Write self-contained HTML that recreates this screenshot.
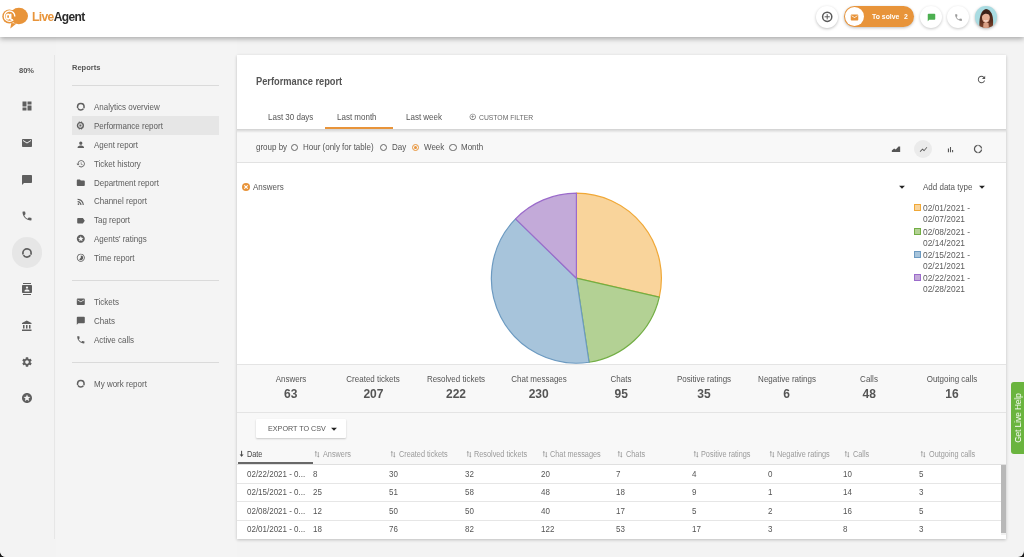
<!DOCTYPE html>
<html><head><meta charset="utf-8">
<style>
*{box-sizing:border-box;margin:0;padding:0}
html,body{width:1024px;height:557px;overflow:hidden;background:#1a1a1a}
body{font-family:"Liberation Sans",sans-serif;color:#5f5f5f;position:relative}
#app{will-change:transform;position:absolute;left:0;top:0;width:1024px;height:557px;background:#f3f3f3;border-radius:0 0 6px 6px;overflow:hidden}
.a{position:absolute;white-space:nowrap}
svg{display:block}
#hdr{position:absolute;left:0;top:0;width:1024px;height:36.5px;background:#fff;box-shadow:0 2px 5px rgba(0,0,0,.3);z-index:5}
#side{position:absolute;left:0;top:37px;width:55px;height:520px;background:#f3f3f3}
#vline{position:absolute;left:54px;top:55px;width:3px;height:484px;border-left:1px solid #e6e6e6;border-right:1px solid #e6e6e6}
#panel{position:absolute;left:56px;top:37px;width:181px;height:520px;background:#f4f4f4}
.mi{position:absolute;left:72px;width:147px;height:19px;font-size:8px;color:#5c5c5c}
.mi svg{position:absolute;left:4px;top:5px;width:9px;height:9px;fill:#616161}
.mi span{position:absolute;left:21px;top:5px}
.hl{position:absolute;left:72px;height:1px;width:147px;background:#dadada}
.sic{position:absolute;left:21px;width:12px;height:12px;fill:#5f5f5f}
#card{position:absolute;left:237px;top:55px;width:769px;height:483.6px;background:#fff;box-shadow:0 1px 3px rgba(0,0,0,.22)}
</style></head><body>
<div id="app">
<div id="hdr">
  <!-- logo -->
  <svg class="a" style="left:0px;top:4px" width="32" height="28" viewBox="0 0 32 28">
    <ellipse cx="18.9" cy="12" rx="9.1" ry="8.2" fill="#e8943a"/>
    <path d="M11.3 19 L10.3 24.6 L16.5 19.5 Z" fill="#e8943a"/>
    <circle cx="9.3" cy="12.5" r="7" fill="#e8943a"/>
    <circle cx="9.6" cy="12.2" r="5.2" fill="none" stroke="#fff" stroke-width="1.4" stroke-dasharray="28.10 4.57" transform="rotate(45 9.6 12.2)"/>
    <ellipse cx="8.1" cy="12.6" rx="1.7" ry="2.3" fill="none" stroke="#fff" stroke-width="1.6"/>
    <path d="M10.7 9.8 V14.4 Q10.9 16.2 12.9 15.8" fill="none" stroke="#fff" stroke-width="1.5"/>
  </svg>
  <div class="a" style="left:32px;top:9.6px;font-size:12px;font-weight:bold;letter-spacing:-0.6px"><span style="color:#e8943a">Live</span><span style="color:#2b2b2b">Agent</span></div>

  <div class="a" style="left:816px;top:6px;width:22px;height:22px;border-radius:50%;background:#fff;box-shadow:0 1px 3px rgba(0,0,0,.25)">
    <svg width="22" height="22" viewBox="0 0 22 22"><circle cx="11.2" cy="10.8" r="4.6" fill="none" stroke="#5a5a5a" stroke-width="1.5"/><path d="M11.2 8.2V13.4M8.6 10.8H13.8" stroke="#5a5a5a" stroke-width="1"/></svg>
  </div>
  <div class="a" style="left:844px;top:6px;width:70px;height:21px;border-radius:11px;background:#e8943a;box-shadow:0 1px 3px rgba(0,0,0,.25)">
    <div class="a" style="left:1px;top:1px;width:19px;height:19px;border-radius:50%;background:#fff">
      <svg width="9" height="9" viewBox="0 0 24 24" style="margin:5.8px 5px" fill="#e8943a"><path d="M20 4H4c-1.1 0-1.99.9-1.99 2L2 18c0 1.1.9 2 2 2h16c1.1 0 2-.9 2-2V6c0-1.1-.9-2-2-2zm0 4l-8 5-8-5V6l8 5 8-5v2z"/></svg>
    </div>
    <div class="a" style="left:27.5px;top:5.6px;font-size:8px;font-weight:bold;color:#fff;transform:scaleX(0.86);transform-origin:0 50%">To solve</div>
    <div class="a" style="left:60px;top:5.6px;font-size:8px;font-weight:bold;color:#fff;transform:scaleX(0.86);transform-origin:0 50%">2</div>
  </div>
  <div class="a" style="left:920px;top:6px;width:22px;height:22px;border-radius:50%;background:#fff;box-shadow:0 1px 3px rgba(0,0,0,.22)">
    <svg width="9" height="9" viewBox="0 0 24 24" style="margin:6.5px" fill="#4caf50"><path d="M20 2H4c-1.1 0-1.99.9-1.99 2L2 22l4-4h14c1.1 0 2-.9 2-2V4c0-1.1-.9-2-2-2z"/></svg>
  </div>
  <div class="a" style="left:947px;top:6px;width:22px;height:22px;border-radius:50%;background:#fff;box-shadow:0 1px 3px rgba(0,0,0,.22)">
    <svg width="9" height="9" viewBox="0 0 24 24" style="margin:6.5px" fill="#9a9a9a"><path d="M6.62 10.79c1.44 2.83 3.76 5.14 6.59 6.59l2.2-2.2c.27-.27.67-.36 1.02-.24 1.12.37 2.330.57 3.57.57.55 0 1 .45 1 1V20c0 .55-.45 1-1 1-9.39 0-17-7.61-17-17 0-.55.45-1 1-1h3.5c.55 0 1 .45 1 1 0 1.250.2 2.45.57 3.57.11.35.03.74-.25 1.02l-2.2 2.2z"/></svg>
  </div>
  <div class="a" style="left:975px;top:6px;width:21.6px;height:21.6px;border-radius:50%;background:#a9dce2;overflow:hidden;box-shadow:0 1px 3px rgba(0,0,0,.3)">
    <svg width="22" height="22" viewBox="0 0 22 22">
      <defs><linearGradient id="hg" x1="0" y1="0" x2="0" y2="1"><stop offset="0" stop-color="#3b2118"/><stop offset="0.6" stop-color="#5a2e1e"/><stop offset="1" stop-color="#8a4a30"/></linearGradient></defs>
      <path d="M4.5 23 C4 15 4.5 4.5 11 3 C17.5 4 18.5 12 18 19 L17 23Z" fill="url(#hg)"/>
      <ellipse cx="10.9" cy="11.6" rx="3.9" ry="5.3" fill="#e6b096"/>
      <path d="M6.8 10 C7 6 9 5 11 5.2 C13.5 5.3 15 7 15 10 C13.5 7.5 10 6.8 6.8 10Z" fill="#3b2118"/>
      <path d="M9.2 14.6 Q10.9 15.8 12.6 14.6" fill="none" stroke="#fff" stroke-width="0.8"/>
      <path d="M8.5 17 L13.5 17 L14 23 L8 23Z" fill="#d9a085"/>
    </svg>
  </div>
</div>

<div id="side"></div>
<div id="vline"></div>
<div id="panel"></div>
<svg class="a" style="left:21px;top:100.3px" width="12" height="12" viewBox="0 0 24 24" fill="#5f5f5f"><path d="M3 13h8V3H3v10zm0 8h8v-6H3v6zm10 0h8V11h-8v10zm0-18v6h8V3h-8z"/></svg>
<svg class="a" style="left:21px;top:136.8px" width="12" height="12" viewBox="0 0 24 24" fill="#5f5f5f"><path d="M20 4H4c-1.1 0-1.99.9-1.99 2L2 18c0 1.1.9 2 2 2h16c1.1 0 2-.9 2-2V6c0-1.1-.9-2-2-2zm0 4l-8 5-8-5V6l8 5 8-5v2z"/></svg>
<svg class="a" style="left:21px;top:173.5px" width="12" height="12" viewBox="0 0 24 24" fill="#5f5f5f"><path d="M20 2H4c-1.1 0-1.99.9-1.99 2L2 22l4-4h14c1.1 0 2-.9 2-2V4c0-1.1-.9-2-2-2z"/></svg>
<svg class="a" style="left:21px;top:210px" width="12" height="12" viewBox="0 0 24 24" fill="#5f5f5f"><path d="M6.62 10.79c1.44 2.83 3.76 5.14 6.59 6.59l2.2-2.2c.27-.27.67-.36 1.02-.24 1.12.37 2.33.57 3.57.57.55 0 1 .45 1 1V20c0 .55-.45 1-1 1-9.39 0-17-7.61-17-17 0-.55.45-1 1-1h3.5c.55 0 1 .45 1 1 0 1.25.2 2.45.57 3.57.11.35.03.74-.25 1.02l-2.2 2.2z"/></svg>
<div class="a" style="left:12px;top:237.4px;width:30.4px;height:30.4px;border-radius:50%;background:#e6e6e6"></div>
<svg class="a" style="left:21px;top:246.6px" width="12" height="12" viewBox="0 0 24 24"><circle cx="12" cy="12" r="8.2" fill="none" stroke="#5f5f5f" stroke-width="3.4" stroke-dasharray="15.87 1.30" transform="rotate(-88 12 12)"/></svg>
<svg class="a" style="left:21px;top:283.2px" width="12" height="12" viewBox="0 0 24 24" fill="#5f5f5f"><path d="M20 0H4v2h16V0zM4 24h16v-2H4v2zM20 4H4c-1.1 0-2 .9-2 2v12c0 1.1.9 2 2 2h16c1.1 0 2-.9 2-2V6c0-1.1-.9-2-2-2zm-8 2.75c1.24 0 2.25 1.01 2.25 2.25s-1.01 2.25-2.25 2.25S9.75 10.24 9.75 9 10.76 6.75 12 6.75zM17 17H7v-1.5c0-1.67 3.33-2.5 5-2.5s5 .83 5 2.5V17z"/></svg>
<svg class="a" style="left:21px;top:320px" width="12" height="12" viewBox="0 0 24 24" fill="#5f5f5f"><path d="M4 10v7h3v-7H4zm6 0v7h3v-7h-3zM2 22h19v-3H2v3zm14-12v7h3v-7h-3zm-4.5-9L2 6v2h19V6l-9.5-5z"/></svg>
<svg class="a" style="left:21px;top:356px" width="12" height="12" viewBox="0 0 24 24" fill="#5f5f5f"><path d="M19.14 12.94c.04-.3.06-.61.06-.94 0-.32-.02-.64-.07-.94l2.03-1.58c.18-.14.23-.41.12-.61l-1.92-3.32c-.12-.22-.37-.29-.59-.22l-2.39.96c-.5-.38-1.03-.7-1.62-.94l-.36-2.54c-.04-.24-.24-.41-.48-.41h-3.84c-.24 0-.43.17-.47.41l-.36 2.54c-.59.24-1.13.57-1.62.94l-2.39-.96c-.22-.08-.47 0-.59.22L2.74 8.87c-.12.21-.08.47.12.61l2.03 1.58c-.05.3-.09.63-.09.94s.02.64.07.94l-2.030 1.58c-.18.14-.23.41-.12.61l1.92 3.32c.12.22.37.29.59.22l2.39-.96c.5.38 1.03.7 1.62.94l.36 2.54c.05.24.24.41.48.41h3.84c.24 0 .44-.17.47-.41l.36-2.54c.59-.24 1.13-.56 1.62-.94l2.39.96c.22.08.47 0 .59-.22l1.92-3.32c.12-.22.07-.47-.12-.61l-2.01-1.58zM12 15.6c-1.98 0-3.6-1.62-3.6-3.6s1.62-3.6 3.6-3.6 3.6 1.62 3.6 3.6-1.62 3.6-3.6 3.6z"/></svg>
<svg class="a" style="left:21px;top:392.3px" width="12" height="12" viewBox="0 0 24 24" fill="#5f5f5f"><path d="M11.99 2C6.47 2 2 6.48 2 12s4.47 10 9.99 10C17.52 22 22 17.52 22 12S17.52 2 11.99 2zm4.24 16L12 15.45 7.77 18l1.12-4.81-3.73-3.23 4.92-.42L12 5l1.92 4.53 4.92.42-3.73 3.23L16.23 18z"/></svg>
<div class="a" style="left:19px;top:66px;font-size:7.5px;font-weight:bold;color:#555">80%</div>
<div class="a" style="left:72px;top:63px;font-size:7.5px;font-weight:bold;color:#555">Reports</div>
<div class="hl" style="top:84.5px"></div>
<svg class="a" style="left:75.6px;top:101.8px" width="9.6" height="9.6" viewBox="0 0 24 24"><circle cx="12" cy="12" r="8.2" fill="none" stroke="#5f5f5f" stroke-width="3.8" stroke-dasharray="15.87 1.30" transform="rotate(-88 12 12)"/></svg>
<div class="a" style="left:93.5px;top:101.70px;font-size:8.96px;color:#5c5c5c;transform:scaleX(0.893);transform-origin:0 50%">Analytics overview</div>
<div class="a" style="left:72px;top:116.2px;width:147px;height:18.8px;background:#e6e6e6"></div>
<svg class="a" style="left:76px;top:121.0px" width="9" height="9" viewBox="0 0 9 9"><circle cx="4.4" cy="4.5" r="2.9" fill="none" stroke="#5f5f5f" stroke-width="1.4"/><rect x="3.4" y="3.5" width="2" height="2" fill="#5f5f5f"/><rect x="2.8" y="0.6" width="1.1" height="1.4" fill="#5f5f5f"/><rect x="4.9" y="0.6" width="1.1" height="1.4" fill="#5f5f5f"/><rect x="2.8" y="7" width="1.1" height="1.4" fill="#5f5f5f"/><rect x="4.9" y="7" width="1.1" height="1.4" fill="#5f5f5f"/></svg>
<div class="a" style="left:93.5px;top:120.65px;font-size:8.96px;color:#5c5c5c;transform:scaleX(0.893);transform-origin:0 50%">Performance report</div>
<svg class="a" style="left:75.6px;top:139.7px" width="9.6" height="9.6" viewBox="0 0 24 24" fill="#5f5f5f"><path d="M12 12c2.21 0 4-1.79 4-4s-1.79-4-4-4-4 1.79-4 4 1.79 4 4 4zm0 2c-2.67 0-8 1.34-8 4v2h16v-2c0-2.66-5.33-4-8-4z"/></svg>
<div class="a" style="left:93.5px;top:139.60px;font-size:8.96px;color:#5c5c5c;transform:scaleX(0.893);transform-origin:0 50%">Agent report</div>
<svg class="a" style="left:75.6px;top:158.6px" width="9.6" height="9.6" viewBox="0 0 24 24" fill="#5f5f5f"><path d="M13 3c-4.97 0-9 4.03-9 9H1l3.89 3.89.07.14L9 12H6c0-3.87 3.13-7 7-7s7 3.13 7 7-3.13 7-7 7c-1.93 0-3.68-.79-4.94-2.06l-1.42 1.42C8.27 19.99 10.51 21 13 21c4.97 0 9-4.03 9-9s-4.03-9-9-9zm-1 5v5l4.28 2.54.72-1.21-3.5-2.08V8H12z"/></svg>
<div class="a" style="left:93.5px;top:158.55px;font-size:8.96px;color:#5c5c5c;transform:scaleX(0.893);transform-origin:0 50%">Ticket history</div>
<svg class="a" style="left:75.6px;top:177.6px" width="9.6" height="9.6" viewBox="0 0 24 24" fill="#5f5f5f"><path d="M10 4H4c-1.1 0-1.99.9-1.99 2L2 18c0 1.1.9 2 2 2h16c1.1 0 2-.9 2-2V8c0-1.1-.9-2-2-2h-8l-2-2z"/></svg>
<div class="a" style="left:93.5px;top:177.50px;font-size:8.96px;color:#5c5c5c;transform:scaleX(0.893);transform-origin:0 50%">Department report</div>
<svg class="a" style="left:75.6px;top:196.5px" width="9.6" height="9.6" viewBox="0 0 24 24" fill="#5f5f5f"><path d="M6.18 15.64a2.18 2.18 0 1 1 0 4.36 2.18 2.18 0 0 1 0-4.36zM4 4.44v2.83c7.03 0 12.73 5.7 12.73 12.73h2.83c0-8.59-6.97-15.56-15.56-15.56zm0 5.66v2.83c3.9 0 7.07 3.17 7.07 7.07h2.83c0-5.47-4.43-9.9-9.9-9.9z"/></svg>
<div class="a" style="left:93.5px;top:196.45px;font-size:8.96px;color:#5c5c5c;transform:scaleX(0.893);transform-origin:0 50%">Channel report</div>
<svg class="a" style="left:75.6px;top:215.5px" width="9.6" height="9.6" viewBox="0 0 24 24" fill="#5f5f5f"><path d="M17.63 5.84C17.27 5.33 16.67 5 16 5L5 5.01C3.9 5.01 3 5.9 3 7v10c0 1.1.9 1.99 2 1.99L16 19c.67 0 1.27-.33 1.63-.84L22 12l-4.37-6.16z"/></svg>
<div class="a" style="left:93.5px;top:215.40px;font-size:8.96px;color:#5c5c5c;transform:scaleX(0.893);transform-origin:0 50%">Tag report</div>
<svg class="a" style="left:75.6px;top:234.4px" width="9.6" height="9.6" viewBox="0 0 24 24" fill="#5f5f5f"><path d="M11.99 2C6.47 2 2 6.48 2 12s4.47 10 9.99 10C17.52 22 22 17.52 22 12S17.52 2 11.99 2zm4.24 16L12 15.45 7.77 18l1.12-4.81-3.73-3.23 4.92-.42L12 5l1.92 4.53 4.92.42-3.73 3.23L16.23 18z"/></svg>
<div class="a" style="left:93.5px;top:234.35px;font-size:8.96px;color:#5c5c5c;transform:scaleX(0.893);transform-origin:0 50%">Agents' ratings</div>
<svg class="a" style="left:75.6px;top:253.4px" width="9.6" height="9.6" viewBox="0 0 24 24" fill="#5f5f5f"><path d="M16.24 7.76C15.07 6.59 13.54 6 12 6v6l-4.24 4.24c2.34 2.34 6.14 2.34 8.49 0 2.34-2.34 2.34-6.14-.01-8.48zM12 2C6.48 2 2 6.48 2 12s4.48 10 10 10 10-4.48 10-10S17.52 2 12 2zm0 18c-4.42 0-8-3.58-8-8s3.58-8 8-8 8 3.58 8 8-3.58 8-8 8z"/></svg>
<div class="a" style="left:93.5px;top:253.30px;font-size:8.96px;color:#5c5c5c;transform:scaleX(0.893);transform-origin:0 50%">Time report</div>
<div class="hl" style="top:280px"></div>
<svg class="a" style="left:75.6px;top:296.7px" width="9.6" height="9.6" viewBox="0 0 24 24" fill="#5f5f5f"><path d="M20 4H4c-1.1 0-1.99.9-1.99 2L2 18c0 1.1.9 2 2 2h16c1.1 0 2-.9 2-2V6c0-1.1-.9-2-2-2zm0 4l-8 5-8-5V6l8 5 8-5v2z"/></svg>
<div class="a" style="left:93.5px;top:296.60px;font-size:8.96px;color:#5c5c5c;transform:scaleX(0.893);transform-origin:0 50%">Tickets</div>
<svg class="a" style="left:75.6px;top:315.7px" width="9.6" height="9.6" viewBox="0 0 24 24" fill="#5f5f5f"><path d="M20 2H4c-1.1 0-1.99.9-1.99 2L2 22l4-4h14c1.1 0 2-.9 2-2V4c0-1.1-.9-2-2-2z"/></svg>
<div class="a" style="left:93.5px;top:315.60px;font-size:8.96px;color:#5c5c5c;transform:scaleX(0.893);transform-origin:0 50%">Chats</div>
<svg class="a" style="left:75.6px;top:334.7px" width="9.6" height="9.6" viewBox="0 0 24 24" fill="#5f5f5f"><path d="M6.62 10.79c1.44 2.83 3.76 5.14 6.59 6.59l2.2-2.2c.27-.27.67-.36 1.02-.24 1.12.37 2.33.57 3.57.57.55 0 1 .45 1 1V20c0 .55-.45 1-1 1-9.39 0-17-7.61-17-17 0-.55.45-1 1-1h3.5c.55 0 1 .45 1 1 0 1.25.2 2.45.57 3.57.11.35.03.74-.25 1.02l-2.2 2.2z"/></svg>
<div class="a" style="left:93.5px;top:334.60px;font-size:8.96px;color:#5c5c5c;transform:scaleX(0.893);transform-origin:0 50%">Active calls</div>
<div class="hl" style="top:361.5px"></div>
<svg class="a" style="left:75.6px;top:378.7px" width="9.6" height="9.6" viewBox="0 0 24 24"><circle cx="12" cy="12" r="8.2" fill="none" stroke="#5f5f5f" stroke-width="3.8" stroke-dasharray="15.87 1.30" transform="rotate(-88 12 12)"/></svg>
<div class="a" style="left:93.5px;top:378.60px;font-size:8.96px;color:#5c5c5c;transform:scaleX(0.893);transform-origin:0 50%">My work report</div>
<div id="card"></div>
<div class="a" style="left:255.8px;top:75.70px;font-size:10.23px;line-height:normal;color:#555;transform:scaleX(0.9091);transform-origin:0 50%;font-weight:bold">Performance report</div>
<svg class="a" style="left:976.0px;top:74.0px" width="11" height="11" viewBox="0 0 24 24" fill="#555"><path d="M17.65 6.35C16.2 4.9 14.21 4 12 4c-4.42 0-7.99 3.58-7.99 8s3.57 8 7.99 8c3.73 0 6.84-2.55 7.73-6h-2.08c-.82 2.33-3.04 4-5.65 4-3.31 0-6-2.690-6-6s2.69-6 6-6c1.66 0 3.14.69 4.22 1.78L13 11h7V4l-2.35 2.35z"/></svg>
<div class="a" style="left:267.7px;top:112.10px;font-size:8.96px;line-height:normal;color:#555;transform:scaleX(0.8929);transform-origin:0 50%;">Last 30 days</div>
<div class="a" style="left:337.3px;top:112.10px;font-size:8.96px;line-height:normal;color:#555;transform:scaleX(0.8929);transform-origin:0 50%;">Last month</div>
<div class="a" style="left:405.6px;top:112.10px;font-size:8.96px;line-height:normal;color:#555;transform:scaleX(0.8929);transform-origin:0 50%;">Last week</div>
<svg class="a" style="left:468.8px;top:113.0px" width="7.5" height="7.5" viewBox="0 0 24 24" fill="#666"><path d="M13 7h-2v4H7v2h4v4h2v-4h4v-2h-4V7zm-1-5C6.48 2 2 6.48 2 12s4.48 10 10 10 10-4.48 10-10S17.52 2 12 2zm0 18c-4.41 0-8-3.59-8-8s3.59-8 8-8 8 3.59 8 8-3.59 8-8 8z"/></svg>
<div class="a" style="left:479.0px;top:112.83px;font-size:7.62px;line-height:normal;color:#666;transform:scaleX(0.8929);transform-origin:0 50%;">CUSTOM FILTER</div>
<div class="a" style="left:324.8px;top:126.8px;width:68.4px;height:2.2px;background:#e8943a"></div>
<div class="a" style="left:237px;top:128.5px;width:769px;height:34px;background:#f8f8f8;border-bottom:1px solid #e2e2e2"></div>
<div class="a" style="left:237px;top:128.5px;width:769px;height:4px;background:linear-gradient(rgba(0,0,0,.16),rgba(0,0,0,0))"></div>
<div class="a" style="left:255.8px;top:142.40px;font-size:8.96px;line-height:normal;color:#555;transform:scaleX(0.8929);transform-origin:0 50%;">group by</div>
<div class="a" style="left:290.9px;top:143.7px;width:7.2px;height:7.2px;border-radius:50%;border:1px solid #666"></div>
<div class="a" style="left:302.5px;top:142.40px;font-size:8.96px;line-height:normal;color:#555;transform:scaleX(0.8929);transform-origin:0 50%;">Hour (only for table)</div>
<div class="a" style="left:380.1px;top:143.7px;width:7.2px;height:7.2px;border-radius:50%;border:1px solid #666"></div>
<div class="a" style="left:391.8px;top:142.40px;font-size:8.96px;line-height:normal;color:#555;transform:scaleX(0.8929);transform-origin:0 50%;">Day</div>
<div class="a" style="left:412.0px;top:143.7px;width:7.2px;height:7.2px;border-radius:50%;border:1px solid #e8943a"></div><div class="a" style="left:413.8px;top:145.5px;width:3.6px;height:3.6px;border-radius:50%;background:#e8943a"></div>
<div class="a" style="left:423.7px;top:142.40px;font-size:8.96px;line-height:normal;color:#555;transform:scaleX(0.8929);transform-origin:0 50%;">Week</div>
<div class="a" style="left:449.4px;top:143.7px;width:7.2px;height:7.2px;border-radius:50%;border:1px solid #666"></div>
<div class="a" style="left:461.4px;top:142.40px;font-size:8.96px;line-height:normal;color:#555;transform:scaleX(0.8929);transform-origin:0 50%;">Month</div>
<div class="a" style="left:914.3px;top:140px;width:18px;height:18px;border-radius:50%;background:#ebebeb"></div>
<svg class="a" style="left:890.7px;top:143.5px" width="10" height="10" viewBox="0 0 24 24" fill="#555"><path d="M2 19 L2 15.5 L7.5 10.5 L11.5 13 L18 6 L22 6 L22 19 Z"/></svg>
<svg class="a" style="left:918.8px;top:144.5px" width="9" height="9" viewBox="0 0 24 24" fill="#555"><path d="M3.5 18.49l6-6.01 4 4L22 6.92l-1.41-1.41-7.09 7.97-4-4L2 16.99z"/></svg>
<svg class="a" style="left:946.3px;top:144.5px" width="9" height="9" viewBox="0 0 24 24" fill="#555"><path d="M5 9.2h3V19H5zM10.6 5h2.8v14h-2.8zm5.6 8H19v6h-2.8z"/></svg>
<svg class="a" style="left:973.3px;top:144.0px" width="10" height="10" viewBox="0 0 24 24" fill="#555"><path d="M11 5.08V2c-5 .5-9 4.81-9 10s4 9.5 9 10v-3.08c-3-.48-6-3.4-6-6.92s3-6.44 6-6.92zM18.97 11H22c-.47-5-4-8.53-9-9v3.08C16 5.51 18.54 8 18.97 11zM13 18.92V22c5-.47 8.530-4 9-9h-3.03c-.43 3-2.97 5.49-5.970 5.92z"/></svg>
<div class="a" style="left:242px;top:182.8px;width:8px;height:8px;border-radius:50%;background:#e8943a"></div>
<svg class="a" style="left:242px;top:182.8px" width="8" height="8" viewBox="0 0 8 8"><path d="M2.3 2.3L5.7 5.7M5.7 2.3L2.3 5.7" stroke="#fff" stroke-width="1.1"/></svg>
<div class="a" style="left:253.0px;top:181.90px;font-size:8.96px;line-height:normal;color:#555;transform:scaleX(0.8929);transform-origin:0 50%;">Answers</div>
<svg class="a" style="left:895.1px;top:179.8px" width="14" height="14" viewBox="0 0 24 24" fill="#222"><path d="M7 10l5 5 5-5z"/></svg>
<div class="a" style="left:923.4px;top:181.90px;font-size:8.96px;line-height:normal;color:#555;transform:scaleX(0.8929);transform-origin:0 50%;">Add data type</div>
<svg class="a" style="left:975.2px;top:179.8px" width="14" height="14" viewBox="0 0 24 24" fill="#222"><path d="M7 10l5 5 5-5z"/></svg>
<div class="a" style="left:914px;top:203.9px;width:7px;height:7px;background:#f9d49b;border:1px solid #f0a837"></div>
<div class="a" style="left:923.4px;top:202.25px;font-size:9.41px;line-height:normal;color:#5c5c5c;transform:scaleX(0.8929);transform-origin:0 50%;">02/01/2021 -</div>
<div class="a" style="left:923.4px;top:213.35px;font-size:9.41px;line-height:normal;color:#5c5c5c;transform:scaleX(0.8929);transform-origin:0 50%;">02/07/2021</div>
<div class="a" style="left:914px;top:227.7px;width:7px;height:7px;background:#b3d194;border:1px solid #72ae44"></div>
<div class="a" style="left:923.4px;top:226.05px;font-size:9.41px;line-height:normal;color:#5c5c5c;transform:scaleX(0.8929);transform-origin:0 50%;">02/08/2021 -</div>
<div class="a" style="left:923.4px;top:237.15px;font-size:9.41px;line-height:normal;color:#5c5c5c;transform:scaleX(0.8929);transform-origin:0 50%;">02/14/2021</div>
<div class="a" style="left:914px;top:250.5px;width:7px;height:7px;background:#a7c4db;border:1px solid #6c9ac1"></div>
<div class="a" style="left:923.4px;top:248.85px;font-size:9.41px;line-height:normal;color:#5c5c5c;transform:scaleX(0.8929);transform-origin:0 50%;">02/15/2021 -</div>
<div class="a" style="left:923.4px;top:259.95px;font-size:9.41px;line-height:normal;color:#5c5c5c;transform:scaleX(0.8929);transform-origin:0 50%;">02/21/2021</div>
<div class="a" style="left:914px;top:273.9px;width:7px;height:7px;background:#c3aad9;border:1px solid #9b6bcb"></div>
<div class="a" style="left:923.4px;top:272.25px;font-size:9.41px;line-height:normal;color:#5c5c5c;transform:scaleX(0.8929);transform-origin:0 50%;">02/22/2021 -</div>
<div class="a" style="left:923.4px;top:283.35px;font-size:9.41px;line-height:normal;color:#5c5c5c;transform:scaleX(0.8929);transform-origin:0 50%;">02/28/2021</div>
<svg class="a" style="left:0;top:0" width="1024" height="557"><path d="M576.40 278.20 L576.40 193.20 A85 85 0 0 1 659.27 297.11 Z" fill="#f9d49b" stroke="#f0a837" stroke-width="1.2" stroke-linejoin="round"/><path d="M576.40 278.20 L659.27 297.11 A85 85 0 0 1 589.07 362.25 Z" fill="#b3d194" stroke="#72ae44" stroke-width="1.2" stroke-linejoin="round"/><path d="M576.40 278.20 L589.07 362.25 A85 85 0 0 1 515.55 218.85 Z" fill="#a7c4db" stroke="#6c9ac1" stroke-width="1.2" stroke-linejoin="round"/><path d="M576.40 278.20 L515.55 218.85 A85 85 0 0 1 576.40 193.20 Z" fill="#c3aad9" stroke="#9b6bcb" stroke-width="1.2" stroke-linejoin="round"/></svg>
<div class="a" style="left:237px;top:364px;width:769px;height:174px;background:#f8f8f8;border-top:1px solid #e4e4e4"></div>
<div class="a" style="left:237px;top:412px;width:769px;height:1px;background:#e4e4e4"></div>
<div class="a" style="left:230.7px;width:120px;text-align:center;top:374.30px;font-size:8.96px;color:#555;transform:scaleX(0.8929);transform-origin:50% 50%;">Answers</div>
<div class="a" style="left:230.7px;width:120px;text-align:center;top:387.24px;font-size:12.00px;color:#555;transform:scaleX(1.0000);transform-origin:50% 50%;font-weight:bold">63</div>
<div class="a" style="left:313.4px;width:120px;text-align:center;top:374.30px;font-size:8.96px;color:#555;transform:scaleX(0.8929);transform-origin:50% 50%;">Created tickets</div>
<div class="a" style="left:313.4px;width:120px;text-align:center;top:387.24px;font-size:12.00px;color:#555;transform:scaleX(1.0000);transform-origin:50% 50%;font-weight:bold">207</div>
<div class="a" style="left:396.0px;width:120px;text-align:center;top:374.30px;font-size:8.96px;color:#555;transform:scaleX(0.8929);transform-origin:50% 50%;">Resolved tickets</div>
<div class="a" style="left:396.0px;width:120px;text-align:center;top:387.24px;font-size:12.00px;color:#555;transform:scaleX(1.0000);transform-origin:50% 50%;font-weight:bold">222</div>
<div class="a" style="left:478.7px;width:120px;text-align:center;top:374.30px;font-size:8.96px;color:#555;transform:scaleX(0.8929);transform-origin:50% 50%;">Chat messages</div>
<div class="a" style="left:478.7px;width:120px;text-align:center;top:387.24px;font-size:12.00px;color:#555;transform:scaleX(1.0000);transform-origin:50% 50%;font-weight:bold">230</div>
<div class="a" style="left:561.3px;width:120px;text-align:center;top:374.30px;font-size:8.96px;color:#555;transform:scaleX(0.8929);transform-origin:50% 50%;">Chats</div>
<div class="a" style="left:561.3px;width:120px;text-align:center;top:387.24px;font-size:12.00px;color:#555;transform:scaleX(1.0000);transform-origin:50% 50%;font-weight:bold">95</div>
<div class="a" style="left:644.0px;width:120px;text-align:center;top:374.30px;font-size:8.96px;color:#555;transform:scaleX(0.8929);transform-origin:50% 50%;">Positive ratings</div>
<div class="a" style="left:644.0px;width:120px;text-align:center;top:387.24px;font-size:12.00px;color:#555;transform:scaleX(1.0000);transform-origin:50% 50%;font-weight:bold">35</div>
<div class="a" style="left:726.7px;width:120px;text-align:center;top:374.30px;font-size:8.96px;color:#555;transform:scaleX(0.8929);transform-origin:50% 50%;">Negative ratings</div>
<div class="a" style="left:726.7px;width:120px;text-align:center;top:387.24px;font-size:12.00px;color:#555;transform:scaleX(1.0000);transform-origin:50% 50%;font-weight:bold">6</div>
<div class="a" style="left:809.3px;width:120px;text-align:center;top:374.30px;font-size:8.96px;color:#555;transform:scaleX(0.8929);transform-origin:50% 50%;">Calls</div>
<div class="a" style="left:809.3px;width:120px;text-align:center;top:387.24px;font-size:12.00px;color:#555;transform:scaleX(1.0000);transform-origin:50% 50%;font-weight:bold">48</div>
<div class="a" style="left:892.0px;width:120px;text-align:center;top:374.30px;font-size:8.96px;color:#555;transform:scaleX(0.8929);transform-origin:50% 50%;">Outgoing calls</div>
<div class="a" style="left:892.0px;width:120px;text-align:center;top:387.24px;font-size:12.00px;color:#555;transform:scaleX(1.0000);transform-origin:50% 50%;font-weight:bold">16</div>
<div class="a" style="left:256px;top:419px;width:90px;height:19px;background:#fff;box-shadow:0 1px 2px rgba(0,0,0,.2);border-radius:1px"></div>
<div class="a" style="left:267.8px;top:424.09px;font-size:8.06px;line-height:normal;color:#555;transform:scaleX(0.8929);transform-origin:0 50%;">EXPORT TO CSV</div>
<svg class="a" style="left:327.0px;top:421.5px" width="14" height="14" viewBox="0 0 24 24" fill="#222"><path d="M7 10l5 5 5-5z"/></svg>
<div class="a" style="left:237px;top:464px;width:769px;height:74.6px;background:#fff"></div>
<div class="a" style="left:237px;top:463.5px;width:769px;height:1px;background:#e0e0e0"></div>
<div class="a" style="left:238px;top:462.3px;width:74.5px;height:1.8px;background:#686868"></div>
<svg class="a" style="left:238px;top:449px" width="8" height="10" viewBox="0 0 8 10"><path d="M3.6 1.8V7.2" stroke="#444" stroke-width="1"/><path d="M1.6 5.6L3.6 7.8L5.6 5.6Z" fill="#444"/></svg>
<div class="a" style="left:247.0px;top:449.53px;font-size:8.18px;line-height:normal;color:#444;transform:scaleX(0.8929);transform-origin:0 50%;">Date</div>
<svg class="a" style="left:314.3px;top:449px" width="7" height="10" viewBox="0 0 7 10"><path d="M1.8 2.6V7.6M4.3 3V8" stroke="#9a9a9a" stroke-width="0.8"/><path d="M0.6 3.4L1.8 2L3 3.4Z M3.1 7.2L4.3 8.6L5.5 7.2Z" fill="#9a9a9a"/></svg>
<div class="a" style="left:322.8px;top:449.53px;font-size:8.18px;line-height:normal;color:#9a9a9a;transform:scaleX(0.8929);transform-origin:0 50%;">Answers</div>
<svg class="a" style="left:390.0px;top:449px" width="7" height="10" viewBox="0 0 7 10"><path d="M1.8 2.6V7.6M4.3 3V8" stroke="#9a9a9a" stroke-width="0.8"/><path d="M0.6 3.4L1.8 2L3 3.4Z M3.1 7.2L4.3 8.6L5.5 7.2Z" fill="#9a9a9a"/></svg>
<div class="a" style="left:398.5px;top:449.53px;font-size:8.18px;line-height:normal;color:#9a9a9a;transform:scaleX(0.8929);transform-origin:0 50%;">Created tickets</div>
<svg class="a" style="left:465.7px;top:449px" width="7" height="10" viewBox="0 0 7 10"><path d="M1.8 2.6V7.6M4.3 3V8" stroke="#9a9a9a" stroke-width="0.8"/><path d="M0.6 3.4L1.8 2L3 3.4Z M3.1 7.2L4.3 8.6L5.5 7.2Z" fill="#9a9a9a"/></svg>
<div class="a" style="left:474.2px;top:449.53px;font-size:8.18px;line-height:normal;color:#9a9a9a;transform:scaleX(0.8929);transform-origin:0 50%;">Resolved tickets</div>
<svg class="a" style="left:541.5px;top:449px" width="7" height="10" viewBox="0 0 7 10"><path d="M1.8 2.6V7.6M4.3 3V8" stroke="#9a9a9a" stroke-width="0.8"/><path d="M0.6 3.4L1.8 2L3 3.4Z M3.1 7.2L4.3 8.6L5.5 7.2Z" fill="#9a9a9a"/></svg>
<div class="a" style="left:550.0px;top:449.53px;font-size:8.18px;line-height:normal;color:#9a9a9a;transform:scaleX(0.8929);transform-origin:0 50%;">Chat messages</div>
<svg class="a" style="left:617.2px;top:449px" width="7" height="10" viewBox="0 0 7 10"><path d="M1.8 2.6V7.6M4.3 3V8" stroke="#9a9a9a" stroke-width="0.8"/><path d="M0.6 3.4L1.8 2L3 3.4Z M3.1 7.2L4.3 8.6L5.5 7.2Z" fill="#9a9a9a"/></svg>
<div class="a" style="left:625.7px;top:449.53px;font-size:8.18px;line-height:normal;color:#9a9a9a;transform:scaleX(0.8929);transform-origin:0 50%;">Chats</div>
<svg class="a" style="left:692.9px;top:449px" width="7" height="10" viewBox="0 0 7 10"><path d="M1.8 2.6V7.6M4.3 3V8" stroke="#9a9a9a" stroke-width="0.8"/><path d="M0.6 3.4L1.8 2L3 3.4Z M3.1 7.2L4.3 8.6L5.5 7.2Z" fill="#9a9a9a"/></svg>
<div class="a" style="left:701.4px;top:449.53px;font-size:8.18px;line-height:normal;color:#9a9a9a;transform:scaleX(0.8929);transform-origin:0 50%;">Positive ratings</div>
<svg class="a" style="left:768.6px;top:449px" width="7" height="10" viewBox="0 0 7 10"><path d="M1.8 2.6V7.6M4.3 3V8" stroke="#9a9a9a" stroke-width="0.8"/><path d="M0.6 3.4L1.8 2L3 3.4Z M3.1 7.2L4.3 8.6L5.5 7.2Z" fill="#9a9a9a"/></svg>
<div class="a" style="left:777.1px;top:449.53px;font-size:8.18px;line-height:normal;color:#9a9a9a;transform:scaleX(0.8929);transform-origin:0 50%;">Negative ratings</div>
<svg class="a" style="left:844.3px;top:449px" width="7" height="10" viewBox="0 0 7 10"><path d="M1.8 2.6V7.6M4.3 3V8" stroke="#9a9a9a" stroke-width="0.8"/><path d="M0.6 3.4L1.8 2L3 3.4Z M3.1 7.2L4.3 8.6L5.5 7.2Z" fill="#9a9a9a"/></svg>
<div class="a" style="left:852.8px;top:449.53px;font-size:8.18px;line-height:normal;color:#9a9a9a;transform:scaleX(0.8929);transform-origin:0 50%;">Calls</div>
<svg class="a" style="left:920.1px;top:449px" width="7" height="10" viewBox="0 0 7 10"><path d="M1.8 2.6V7.6M4.3 3V8" stroke="#9a9a9a" stroke-width="0.8"/><path d="M0.6 3.4L1.8 2L3 3.4Z M3.1 7.2L4.3 8.6L5.5 7.2Z" fill="#9a9a9a"/></svg>
<div class="a" style="left:928.6px;top:449.53px;font-size:8.18px;line-height:normal;color:#9a9a9a;transform:scaleX(0.8929);transform-origin:0 50%;">Outgoing calls</div>
<div class="a" style="left:246.8px;top:468.80px;font-size:8.96px;line-height:normal;color:#555;transform:scaleX(0.8929);transform-origin:0 50%;">02/22/2021 - 0...</div>
<div class="a" style="left:313.3px;top:468.80px;font-size:8.96px;line-height:normal;color:#555;transform:scaleX(0.8929);transform-origin:0 50%;">8</div>
<div class="a" style="left:389.0px;top:468.80px;font-size:8.96px;line-height:normal;color:#555;transform:scaleX(0.8929);transform-origin:0 50%;">30</div>
<div class="a" style="left:464.7px;top:468.80px;font-size:8.96px;line-height:normal;color:#555;transform:scaleX(0.8929);transform-origin:0 50%;">32</div>
<div class="a" style="left:540.5px;top:468.80px;font-size:8.96px;line-height:normal;color:#555;transform:scaleX(0.8929);transform-origin:0 50%;">20</div>
<div class="a" style="left:616.2px;top:468.80px;font-size:8.96px;line-height:normal;color:#555;transform:scaleX(0.8929);transform-origin:0 50%;">7</div>
<div class="a" style="left:691.9px;top:468.80px;font-size:8.96px;line-height:normal;color:#555;transform:scaleX(0.8929);transform-origin:0 50%;">4</div>
<div class="a" style="left:767.6px;top:468.80px;font-size:8.96px;line-height:normal;color:#555;transform:scaleX(0.8929);transform-origin:0 50%;">0</div>
<div class="a" style="left:843.3px;top:468.80px;font-size:8.96px;line-height:normal;color:#555;transform:scaleX(0.8929);transform-origin:0 50%;">10</div>
<div class="a" style="left:919.1px;top:468.80px;font-size:8.96px;line-height:normal;color:#555;transform:scaleX(0.8929);transform-origin:0 50%;">5</div>
<div class="a" style="left:237px;top:483.0px;width:764px;height:1px;background:#e6e6e6"></div>
<div class="a" style="left:246.8px;top:487.30px;font-size:8.96px;line-height:normal;color:#555;transform:scaleX(0.8929);transform-origin:0 50%;">02/15/2021 - 0...</div>
<div class="a" style="left:313.3px;top:487.30px;font-size:8.96px;line-height:normal;color:#555;transform:scaleX(0.8929);transform-origin:0 50%;">25</div>
<div class="a" style="left:389.0px;top:487.30px;font-size:8.96px;line-height:normal;color:#555;transform:scaleX(0.8929);transform-origin:0 50%;">51</div>
<div class="a" style="left:464.7px;top:487.30px;font-size:8.96px;line-height:normal;color:#555;transform:scaleX(0.8929);transform-origin:0 50%;">58</div>
<div class="a" style="left:540.5px;top:487.30px;font-size:8.96px;line-height:normal;color:#555;transform:scaleX(0.8929);transform-origin:0 50%;">48</div>
<div class="a" style="left:616.2px;top:487.30px;font-size:8.96px;line-height:normal;color:#555;transform:scaleX(0.8929);transform-origin:0 50%;">18</div>
<div class="a" style="left:691.9px;top:487.30px;font-size:8.96px;line-height:normal;color:#555;transform:scaleX(0.8929);transform-origin:0 50%;">9</div>
<div class="a" style="left:767.6px;top:487.30px;font-size:8.96px;line-height:normal;color:#555;transform:scaleX(0.8929);transform-origin:0 50%;">1</div>
<div class="a" style="left:843.3px;top:487.30px;font-size:8.96px;line-height:normal;color:#555;transform:scaleX(0.8929);transform-origin:0 50%;">14</div>
<div class="a" style="left:919.1px;top:487.30px;font-size:8.96px;line-height:normal;color:#555;transform:scaleX(0.8929);transform-origin:0 50%;">3</div>
<div class="a" style="left:237px;top:501.3px;width:764px;height:1px;background:#e6e6e6"></div>
<div class="a" style="left:246.8px;top:505.80px;font-size:8.96px;line-height:normal;color:#555;transform:scaleX(0.8929);transform-origin:0 50%;">02/08/2021 - 0...</div>
<div class="a" style="left:313.3px;top:505.80px;font-size:8.96px;line-height:normal;color:#555;transform:scaleX(0.8929);transform-origin:0 50%;">12</div>
<div class="a" style="left:389.0px;top:505.80px;font-size:8.96px;line-height:normal;color:#555;transform:scaleX(0.8929);transform-origin:0 50%;">50</div>
<div class="a" style="left:464.7px;top:505.80px;font-size:8.96px;line-height:normal;color:#555;transform:scaleX(0.8929);transform-origin:0 50%;">50</div>
<div class="a" style="left:540.5px;top:505.80px;font-size:8.96px;line-height:normal;color:#555;transform:scaleX(0.8929);transform-origin:0 50%;">40</div>
<div class="a" style="left:616.2px;top:505.80px;font-size:8.96px;line-height:normal;color:#555;transform:scaleX(0.8929);transform-origin:0 50%;">17</div>
<div class="a" style="left:691.9px;top:505.80px;font-size:8.96px;line-height:normal;color:#555;transform:scaleX(0.8929);transform-origin:0 50%;">5</div>
<div class="a" style="left:767.6px;top:505.80px;font-size:8.96px;line-height:normal;color:#555;transform:scaleX(0.8929);transform-origin:0 50%;">2</div>
<div class="a" style="left:843.3px;top:505.80px;font-size:8.96px;line-height:normal;color:#555;transform:scaleX(0.8929);transform-origin:0 50%;">16</div>
<div class="a" style="left:919.1px;top:505.80px;font-size:8.96px;line-height:normal;color:#555;transform:scaleX(0.8929);transform-origin:0 50%;">5</div>
<div class="a" style="left:237px;top:519.6px;width:764px;height:1px;background:#e6e6e6"></div>
<div class="a" style="left:246.8px;top:524.30px;font-size:8.96px;line-height:normal;color:#555;transform:scaleX(0.8929);transform-origin:0 50%;">02/01/2021 - 0...</div>
<div class="a" style="left:313.3px;top:524.30px;font-size:8.96px;line-height:normal;color:#555;transform:scaleX(0.8929);transform-origin:0 50%;">18</div>
<div class="a" style="left:389.0px;top:524.30px;font-size:8.96px;line-height:normal;color:#555;transform:scaleX(0.8929);transform-origin:0 50%;">76</div>
<div class="a" style="left:464.7px;top:524.30px;font-size:8.96px;line-height:normal;color:#555;transform:scaleX(0.8929);transform-origin:0 50%;">82</div>
<div class="a" style="left:540.5px;top:524.30px;font-size:8.96px;line-height:normal;color:#555;transform:scaleX(0.8929);transform-origin:0 50%;">122</div>
<div class="a" style="left:616.2px;top:524.30px;font-size:8.96px;line-height:normal;color:#555;transform:scaleX(0.8929);transform-origin:0 50%;">53</div>
<div class="a" style="left:691.9px;top:524.30px;font-size:8.96px;line-height:normal;color:#555;transform:scaleX(0.8929);transform-origin:0 50%;">17</div>
<div class="a" style="left:767.6px;top:524.30px;font-size:8.96px;line-height:normal;color:#555;transform:scaleX(0.8929);transform-origin:0 50%;">3</div>
<div class="a" style="left:843.3px;top:524.30px;font-size:8.96px;line-height:normal;color:#555;transform:scaleX(0.8929);transform-origin:0 50%;">8</div>
<div class="a" style="left:919.1px;top:524.30px;font-size:8.96px;line-height:normal;color:#555;transform:scaleX(0.8929);transform-origin:0 50%;">3</div>
<div class="a" style="left:1000.8px;top:464.5px;width:5.2px;height:70.5px;background:#f0f0f0"></div>
<div class="a" style="left:1000.8px;top:465px;width:4.8px;height:67.5px;background:#b8b8b8"></div>
<div class="a" style="left:1010.5px;top:382px;width:20px;height:72px;border-radius:3px;background:#6ab43e"></div>
<div class="a" style="left:977.8px;top:412.5px;width:80px;height:10px;line-height:10px;text-align:center;font-size:9.2px;color:#fff;transform:rotate(-90deg) scaleX(0.89);transform-origin:40px 5px">Get Live Help</div></div>
</body></html>
